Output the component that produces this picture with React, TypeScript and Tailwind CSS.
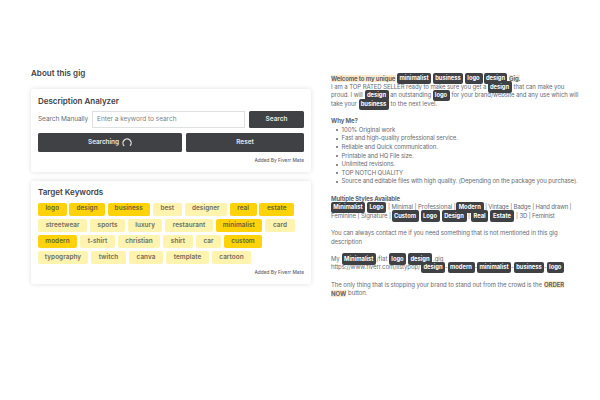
import type { ReactNode } from "react";

function Card({ title, className, children }: { title: string; className: string; children: ReactNode }) {
  return (
    <section className={`flex w-[280px] flex-col rounded-[2px] bg-white px-[7px] shadow-[0_0_5px_rgba(0,0,0,0.13)] ${className}`}>
      <h2 className="h-3 whitespace-nowrap text-[8px] font-semibold leading-[13px] tracking-[-0.01px] text-[#404145]">{title}</h2>
      {children}
    </section>
  );
}

function Credit({ className }: { className: string }) {
  return <p className={`self-end whitespace-nowrap text-[4.8px] font-medium leading-[6px] tracking-[0px] text-[#62646a] ${className}`}>Added By Fiverr Mate</p>;
}

function Chip({ w, on, children }: { w: string; on?: boolean; children: string }) {
  return (
    <span className={`flex h-[13px] shrink-0 items-center justify-center whitespace-nowrap rounded-[2px] pt-[0.5px] text-[6.4px] font-semibold tracking-[0.06px] ${on ? "bg-[#ffd20a] text-[#6b6234]" : "bg-[#fff3b0] text-[#6f6d5c]"} ${w}`}>
      {children}
    </span>
  );
}

function Line({ children }: { children?: ReactNode }) {
  return <div className="flex h-[8.6px] items-center whitespace-nowrap">{children}</div>;
}

function Text({ w = "", children }: { w?: string; children: ReactNode }) {
  return <span className={`shrink-0 ${w}`}>{children}</span>;
}

function Tag({ w, children }: { w: string; children: string }) {
  return (
    <span className={`relative z-10 -my-2 flex h-[11.4px] shrink-0 items-center justify-center rounded-[2px] bg-[#404145] text-[5.8px] font-bold tracking-[0px] text-white ${w}`}>
      {children}
    </span>
  );
}

function Bullet({ children }: { children: string }) {
  return (
    <li className="flex h-[8.6px] items-center whitespace-nowrap pl-[5px]">
      <span className="mr-[3.6px] size-[2px] shrink-0 rounded-full bg-[#62646a]" />
      <span className="tracking-[-0.095px]">{children}</span>
    </li>
  );
}

export default function App() {
  return (
    <main className="flex h-[400px] w-[600px] overflow-hidden bg-white font-['Inter','Liberation_Sans',sans-serif]">
      <div className="ml-[31px] w-[280px] pt-[67px]">
        <h1 className="h-[22px] whitespace-nowrap text-[8px] font-semibold leading-[13px] tracking-[0.04px] text-[#404145]">About this gig</h1>

        <Card title="Description Analyzer" className="h-[83px] pt-[6px]">
          <div className="mt-[4px] flex h-[17px] items-center">
            <span className="w-[54px] shrink-0 whitespace-nowrap pt-px text-[6.5px] tracking-[-0.06px] text-[#6a6c73]">Search Manually</span>
            <div className="flex h-[17px] w-[153px] items-center border border-[#dfe0e2] pl-1 pt-px text-[6.5px] tracking-[-0.02px] text-[#7d7f86]">Enter a keyword to search</div>
            <button className="ml-1 h-[17px] w-[55px] rounded-[1.5px] bg-[#404145] pt-px text-[6.5px] font-semibold tracking-[-0.05px] text-[#e4e5e7]">Search</button>
          </div>
          <div className="mt-[5px] flex h-[19px] gap-1">
            <button className="flex w-[144px] items-center justify-center gap-[3px] rounded-[1.5px] bg-[#404145] text-[6.5px] font-semibold tracking-[-0.1px] text-[#e4e5e7]">
              Searching
              <svg className="size-[10px]" viewBox="0 0 10 10" fill="none" stroke="#dcdde0" strokeWidth="1.3">
                <path d="M2.2 8A4.1 4.1 0 1 1 8.1 7.8" />
              </svg>
            </button>
            <button className="w-[118px] rounded-[1.5px] bg-[#404145] text-[6.5px] font-semibold tracking-[-0.05px] text-[#e4e5e7]">Reset</button>
          </div>
          <Credit className="mt-[5px]" />
        </Card>

        <Card title="Target Keywords" className="mt-[9px] h-[103px] pt-[5px]">
          <div className="mt-[4.5px] flex flex-col gap-[3.2px]">
            <div className="flex gap-[2.7px]">
              <Chip on w="w-[28.5px]">logo</Chip>
              <Chip on w="w-[35.7px]">design</Chip>
              <Chip on w="w-[42.4px]">business</Chip>
              <Chip w="w-[29.3px]">best</Chip>
              <Chip w="w-[42.3px]">designer</Chip>
              <Chip on w="w-[27px]">real</Chip>
              <Chip on w="w-[35px]">estate</Chip>
            </div>
            <div className="flex gap-[3px]">
              <Chip w="w-[49.3px]">streetwear</Chip>
              <Chip w="w-[34.7px]">sports</Chip>
              <Chip w="w-[34.3px]">luxury</Chip>
              <Chip w="w-[47.4px]">restaurant</Chip>
              <Chip on w="w-[46.3px]">minimalist</Chip>
              <Chip w="w-[30px]">card</Chip>
            </div>
            <div className="flex gap-[3px]">
              <Chip on w="w-[39px]">modern</Chip>
              <Chip w="w-[35px]">t-shirt</Chip>
              <Chip w="w-[42px]">christian</Chip>
              <Chip w="w-[30px]">shirt</Chip>
              <Chip w="w-[25px]">car</Chip>
              <Chip on w="w-[38px]">custom</Chip>
            </div>
            <div className="flex gap-[3px]">
              <Chip w="w-[50px]">typography</Chip>
              <Chip w="w-[35px]">twitch</Chip>
              <Chip w="w-[34px]">canva</Chip>
              <Chip w="w-[43px]">template</Chip>
              <Chip w="w-[39px]">cartoon</Chip>
            </div>
          </div>
          <Credit className="mt-[4.8px]" />
        </Card>
      </div>

      <article className="ml-5 w-[255px] pt-[74.3px] text-[6px] leading-[8.6px] tracking-[-0.075px] text-[#696b72]">
        <Line>
          <span className="mr-px w-[65px] bg-[#ffe9c9] font-bold leading-[7px] tracking-[-0.12px] text-[#62646a]">Welcome to my unique</span>
          <Tag w="w-[34px]">minimalist</Tag>
          <Tag w="ml-[2px] w-[30px]">business</Tag>
          <Tag w="ml-[1.5px] w-[18px]">logo</Tag>
          <Tag w="ml-[1.5px] w-[23px]">design</Tag>
          <span className="ml-[2px] bg-[#ffe9c9] font-bold leading-[7px] tracking-[-0.12px] text-[#62646a]">Gig.</span>
        </Line>
        <Line>
          <Text w="w-[156.5px]">I am a TOP RATED SELLER ready to make sure you get a</Text>
          <Tag w="w-[24px]">design</Tag>
          <Text w="ml-[2px]">that can make you</Text>
        </Line>
        <Line>
          <Text w="w-[33.5px]">proud. I will</Text>
          <Tag w="w-[24px]">design</Tag>
          <Text w="ml-[1.5px] w-[42.5px]">an outstanding</Text>
          <Tag w="w-[17px]">logo</Tag>
          <Text w="ml-[2px]">for your brand/website and any use which will</Text>
        </Line>
        <Line>
          <Text w="w-[27.5px]">take your</Text>
          <Tag w="w-[30px]">business</Tag>
          <Text w="ml-[2px] tracking-[0px]">to the next level.</Text>
        </Line>
        <Line />
        <Line><strong className="font-bold text-[#62646a]">Why Me?</strong></Line>
        <ul>
          <Bullet>100% Original work</Bullet>
          <Bullet>Fast and high-quality professional service.</Bullet>
          <Bullet>Reliable and Quick communication.</Bullet>
          <Bullet>Printable and HQ File size.</Bullet>
          <Bullet>Unlimited revisions.</Bullet>
          <Bullet>TOP NOTCH QUALITY</Bullet>
          <Bullet>Source and editable files with high quality. (Depending on the package you purchase).</Bullet>
        </ul>
        <Line />
        <Line><strong className="font-bold tracking-[-0.12px] text-[#62646a]">Multiple Styles Available</strong></Line>
        <Line>
          <Tag w="w-[34px]">Minimalist</Tag>
          <Tag w="ml-[2px] w-[19px]">Logo</Tag>
          <Text w="ml-[2px] w-[68px]">| Minimal | Professional |</Text>
          <Tag w="w-[27.5px]">Modern</Tag>
          <Text w="ml-[1.5px] tracking-[-0.19px]">| Vintage | Badge | Hand drawn |</Text>
        </Line>
        <Line>
          <Text w="w-[60.5px]">Feminine | Signature |</Text>
          <Tag w="w-[27px]">Custom</Tag>
          <Tag w="ml-[2px] w-[19px]">Logo</Tag>
          <Tag w="ml-[2px] w-[25px]">Design</Tag>
          <Text w="ml-[1.5px] w-[3px]">|</Text>
          <Tag w="w-[17px]">Real</Tag>
          <Tag w="ml-[2px] w-[24px]">Estate</Tag>
          <Text w="ml-[2px] tracking-[-0.14px]">| 3D | Feminist</Text>
        </Line>
        <Line />
        <Line><Text>You can always contact me if you need something that is not mentioned in this gig</Text></Line>
        <Line><Text>description</Text></Line>
        <Line />
        <Line>
          <Text w="w-[11px]">My</Text>
          <Tag w="w-[33.5px]">Minimalist</Tag>
          <Text w="ml-px w-[12.5px]">/flat</Text>
          <Tag w="w-[17px]">logo</Tag>
          <Tag w="ml-[2px] w-[24px]">design</Tag>
          <Text w="ml-px">.gig</Text>
        </Line>
        <Line>
          <Text w="w-[90px] tracking-[-0.08px]">https://www.fiverr.com/listypop/</Text>
          <Tag w="w-[24px]">design</Tag>
          <Text w="w-[2.5px]">-</Text>
          <Tag w="w-[27px]">modern</Tag>
          <Text w="w-[2.5px]">-</Text>
          <Tag w="w-[34px]">minimalist</Tag>
          <Text w="w-[3px]">-</Text>
          <Tag w="w-[30px]">business</Tag>
          <Text w="w-[2.5px]">-</Text>
          <Tag w="w-[17.5px]">logo</Tag>
        </Line>
        <Line />
        <Line>
          <Text w="w-[213px] tracking-[-0.06px]">The only thing that is stopping your brand to stand out from the crowd is the</Text>
          <strong className="bg-[#ffe9c9] font-bold leading-[7px] text-[#62646a]">ORDER</strong>
        </Line>
        <Line>
          <strong className="mr-[2px] bg-[#ffe9c9] font-bold leading-[7px] text-[#62646a]">NOW</strong>
          <Text>button.</Text>
        </Line>
      </article>
    </main>
  );
}
